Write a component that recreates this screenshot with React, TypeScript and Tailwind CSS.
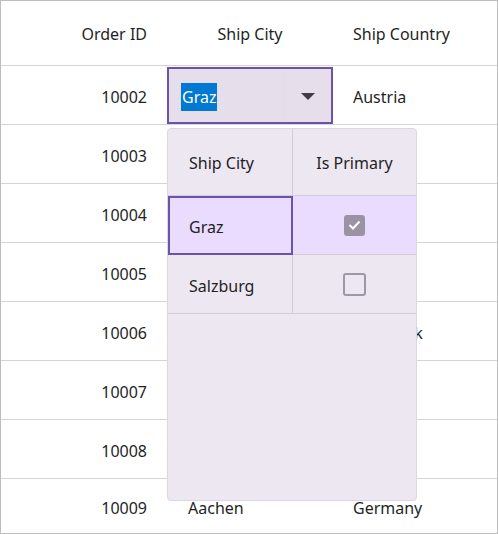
import React from "react";

const rows = [
  { id: "10002", city: "Graz", country: "Austria" },
  { id: "10003", city: "", country: "" },
  { id: "10004", city: "", country: "" },
  { id: "10005", city: "", country: "" },
  { id: "10006", city: "", country: "Denmark" },
  { id: "10007", city: "", country: "" },
  { id: "10008", city: "", country: "" },
  { id: "10009", city: "Aachen", country: "Germany" },
];

export default function App() {
  return (
    <div
      className="relative w-[498px] h-[534px] bg-white border border-[#bdbdbd] text-[16px] text-[#1f1f1f] overflow-hidden"
      style={{ fontFamily: '"Segoe UI", "Noto Sans", "Open Sans", sans-serif' }}
    >
      {/* header */}
      <div className="flex h-[65px] border-b border-[#d6d3da] items-center pt-[2px]">
        <div className="w-[166px] text-right pr-[20px]">Order ID</div>
        <div className="w-[166px] text-center">Ship City</div>
        <div className="flex-1 pl-[20px]">Ship Country</div>
      </div>
      {rows.map((r, i) => (
        <div
          key={r.id}
          className={`flex items-center ${i < rows.length - 1 ? "h-[59px] border-b border-[#d6d3da]" : "h-[54px]"} ${i === 0 ? "" : "pt-[4px]"}`}
        >
          <div className={`w-[166px] text-right pr-[20px] ${i === 0 ? "pt-[4px]" : ""}`}>{r.id}</div>
          {i === 0 ? (
            <div className="w-[166px] h-full flex">
              <div className="flex-1 flex items-stretch border-2 border-[#6c52aa] bg-[#e6dfeb] mt-[1px]">
                <div className="flex-1 flex items-center pl-[12px] pt-[3px]">
                  <span className="bg-[#0078d4] text-white leading-[28px] px-[1px]">Graz</span>
                </div>
                <div className="w-[47px] border-l border-[#e2dce7] flex items-center justify-center pt-[2px]">
                  <svg width="16" height="8" viewBox="0 0 16 8">
                    <path d="M1 0 L15 0 L8 7 Z" fill="#403c44" />
                  </svg>
                </div>
              </div>
            </div>
          ) : (
            <div className="w-[166px] pl-[21px]">{r.city}</div>
          )}
          <div className={`flex-1 pl-[20px] ${i === 0 ? "pt-[4px]" : ""}`}>{r.country}</div>
        </div>
      ))}

      {/* dropdown popup */}
      <div className="absolute left-[166px] top-[127px] w-[250px] h-[373px] bg-[#ede7f2] border border-[#dcd6e0] rounded-[4px] overflow-hidden flex flex-col">
        <div className="flex h-[67px] border-b border-[#d3cdd8]">
          <div className="w-[125px] border-r border-[#d3cdd8] flex items-center pl-[21px] pt-[2px]">Ship City</div>
          <div className="flex-1 flex items-center justify-center pt-[2px]">Is Primary</div>
        </div>
        <div className="flex h-[59px] bg-[#e9dcff]">
          <div className="w-[125px] border-2 border-[#6c52aa] flex items-center pl-[19px] pt-[2px]">Graz</div>
          <div className="flex-1 flex items-center justify-center border-b border-[#d3cdd8]">
            <div className="w-[21px] h-[21px] rounded-[3px] bg-[#9b93a4] flex items-center justify-center">
              <svg width="13" height="10" viewBox="0 0 13 10">
                <path d="M1.5 5 L5 8.5 L11.5 1.5" stroke="white" strokeWidth="2" fill="none" />
              </svg>
            </div>
          </div>
        </div>
        <div className="flex h-[59px] border-b border-[#d3cdd8]">
          <div className="w-[125px] border-r border-[#d3cdd8] flex items-center pl-[21px] pt-[3px]">Salzburg</div>
          <div className="flex-1 flex items-center justify-center">
            <div className="w-[23px] h-[23px] rounded-[3px] border-2 border-[#9e97a6]" />
          </div>
        </div>
        <div className="flex-1" />
      </div>
    </div>
  );
}
